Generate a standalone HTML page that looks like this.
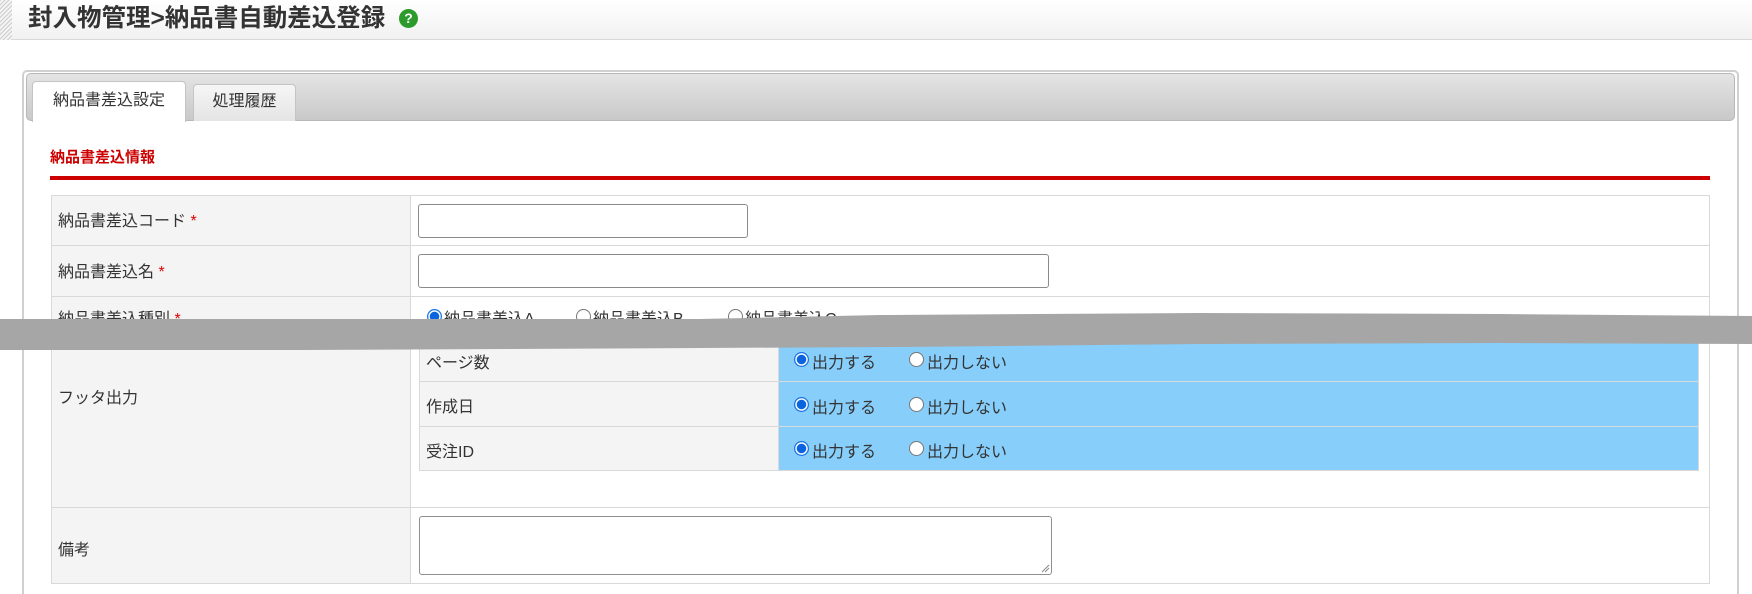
<!DOCTYPE html>
<html style="overflow:hidden;height:594px"><head><meta charset="utf-8">
<style>
*{margin:0;padding:0;box-sizing:border-box}
body{width:1752px;height:594px;overflow:hidden;background:#fff;font-family:"Liberation Sans","Noto Sans CJK JP",sans-serif;color:#333;position:relative}
.a{position:absolute}
.hdr{left:0;top:0;width:1752px;height:40px;background:linear-gradient(#fff,#f1f1f1);border-bottom:1px solid #d8d8d8}
.stripe{left:0;top:0;width:12px;height:40px;background:repeating-linear-gradient(135deg,#ccc 0 1px,#f4f4f4 1px 3px)}
.title{left:28px;top:3px;font-size:24.5px;font-weight:bold;color:#333;line-height:32px}
.help{left:399px;top:9px;width:19px;height:19px;border-radius:50%;background:#2c9b2c;color:#fff;font-size:14px;font-weight:bold;text-align:center;line-height:19px}
.panel{left:22px;top:70px;width:1717px;height:524px;border:2px solid #d0d0d0;border-bottom:none;border-radius:5px 5px 0 0}
.tabbar{left:26px;top:73px;width:1709px;height:48px;background:linear-gradient(#e4e4e4,#c9c9c9);border:1px solid #b8b8b8;border-radius:5px}
.tab{font-size:16px;color:#333;line-height:38px;text-align:center;border:1px solid #c4c4c4;border-bottom:none;border-radius:4px 4px 0 0}
.sec{left:50px;top:146px;font-size:15px;font-weight:bold;color:#cc0000}
.red{left:50px;top:176px;width:1660px;height:4px;background:#cc0000}
.cell{border:1px solid #d9d9d9}
.lbl{background:#f3f4f3}
.t{font-size:16px;color:#333;white-space:nowrap}
.star{color:#e00000}
.inp{border:1px solid #8a8a8a;border-radius:3px;background:#fff}
.blue{background:#87cefa}
.rad{width:15px;height:15px;border-radius:50%;border:1px solid #767676;background:#fff}
.on{border:1px solid #1a73e8;background:radial-gradient(circle,#0a64e0 0 4.5px,#fff 5px 6px,#1a73e8 6.5px)}
</style></head><body>
<div class="a hdr"></div>
<div class="a stripe"></div>
<div class="a title">封入物管理&gt;納品書自動差込登録</div>
<div class="a help">?</div>

<div class="a panel"></div>
<div class="a tabbar"></div>
<div class="a tab" style="left:32px;top:81px;width:154px;height:41px;background:#fff">納品書差込設定</div>
<div class="a tab" style="left:193px;top:84px;width:103px;height:37px;background:linear-gradient(#f6f6f6,#e4e4e4);line-height:34px">処理履歴</div>

<div class="a sec">納品書差込情報</div>
<div class="a red"></div>

<div class="a cell lbl" style="left:51px;top:195px;width:360px;height:51px"></div>
<div class="a cell" style="left:410px;top:195px;width:1300px;height:51px"></div>
<div class="a cell lbl" style="left:51px;top:245px;width:360px;height:52px"></div>
<div class="a cell" style="left:410px;top:245px;width:1300px;height:52px"></div>
<div class="a cell lbl" style="left:51px;top:296px;width:360px;height:40px"></div>
<div class="a cell" style="left:410px;top:296px;width:1300px;height:40px"></div>
<div class="a cell lbl" style="left:51px;top:335px;width:360px;height:173px"></div>
<div class="a cell" style="left:410px;top:335px;width:1300px;height:173px"></div>
<div class="a cell lbl" style="left:51px;top:507px;width:360px;height:77px"></div>
<div class="a cell" style="left:410px;top:507px;width:1300px;height:77px"></div>

<div class="a t" style="left:58px;top:207px">納品書差込コード <span class="star">*</span></div>
<div class="a t" style="left:58px;top:258px">納品書差込名 <span class="star">*</span></div>
<div class="a t" style="left:58px;top:305px">納品書差込種別 <span class="star">*</span></div>
<div class="a t" style="left:58px;top:384px">フッタ出力</div>
<div class="a t" style="left:58px;top:536px">備考</div>

<div class="a inp" style="left:418px;top:204px;width:330px;height:34px"></div>
<div class="a inp" style="left:418px;top:254px;width:631px;height:34px"></div>

<div class="a rad on" style="left:427px;top:309px"></div>
<div class="a t" style="left:444px;top:305px">納品書差込A</div>
<div class="a rad" style="left:576px;top:309px"></div>
<div class="a t" style="left:593px;top:305px">納品書差込B</div>
<div class="a rad" style="left:728px;top:309px"></div>
<div class="a t" style="left:745px;top:305px">納品書差込C</div>

<div class="a cell lbl" style="left:419px;top:337px;width:360px;height:45px"></div>
<div class="a cell blue" style="left:778px;top:337px;width:921px;height:45px"></div>
<div class="a cell lbl" style="left:419px;top:381px;width:360px;height:46px"></div>
<div class="a cell blue" style="left:778px;top:381px;width:921px;height:46px"></div>
<div class="a cell lbl" style="left:419px;top:426px;width:360px;height:45px"></div>
<div class="a cell blue" style="left:778px;top:426px;width:921px;height:45px"></div>

<div class="a t" style="left:426px;top:349px">ページ数</div>
<div class="a t" style="left:426px;top:393px">作成日</div>
<div class="a t" style="left:426px;top:438px">受注ID</div>

<div class="a rad on" style="left:794px;top:352px"></div><div class="a t" style="left:812px;top:349px">出力する</div>
<div class="a rad" style="left:909px;top:352px"></div><div class="a t" style="left:927px;top:349px">出力しない</div>
<div class="a rad on" style="left:794px;top:397px"></div><div class="a t" style="left:812px;top:394px">出力する</div>
<div class="a rad" style="left:909px;top:397px"></div><div class="a t" style="left:927px;top:394px">出力しない</div>
<div class="a rad on" style="left:794px;top:441px"></div><div class="a t" style="left:812px;top:438px">出力する</div>
<div class="a rad" style="left:909px;top:441px"></div><div class="a t" style="left:927px;top:438px">出力しない</div>

<div class="a inp" style="left:419px;top:516px;width:633px;height:59px;border-color:#8f8f8f"></div>
<svg class="a" style="left:1040px;top:563px" width="10" height="10"><path d="M2 9L9 2M5 9L9 5" stroke="#888" stroke-width="1"/></svg>

<svg class="a" style="left:0;top:300px" width="1752" height="60">
<path d="M0 19 L700 19 L880 15 L1200 13 L1500 14 L1752 16 L1752 44 L1500 43 L1200 44 L900 47 L700 48 L300 50 L0 50 Z" fill="#a6a6a6"/>
</svg>
</body></html>
